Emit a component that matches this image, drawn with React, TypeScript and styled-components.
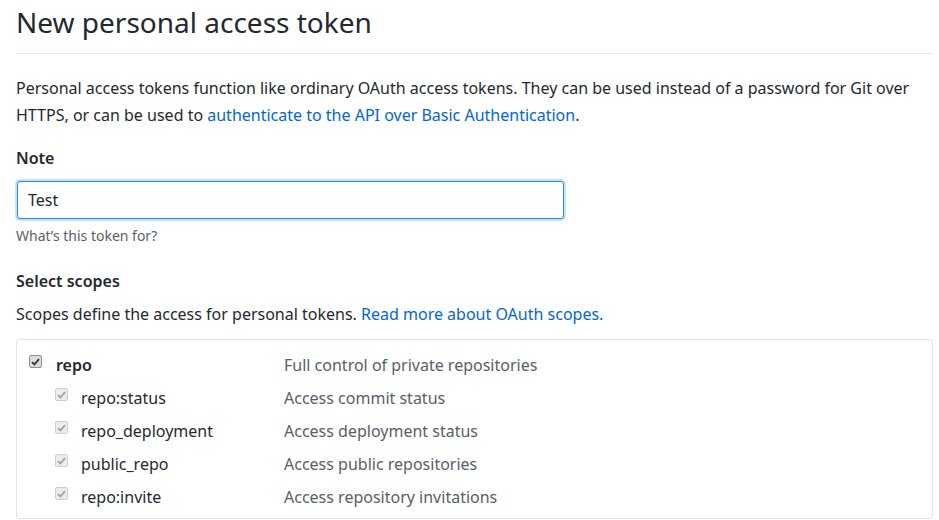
import styled, { createGlobalStyle } from "styled-components";

const GlobalStyle = createGlobalStyle`
  body {
    margin: 0;
    background: #fff;
    font-family: "Noto Sans", "Open Sans", sans-serif;
    color: #24292e;
  }
`

type Scope = {
    name: string
    text: string
    child?: boolean
}

const scopes: Scope[] = [
    {name: "repo", text: "Full control of private repositories"},
    {name: "repo:status", text: "Access commit status", child: true},
    {name: "repo_deployment", text: "Access deployment status", child: true},
    {name: "public_repo", text: "Access public repositories", child: true},
    {name: "repo:invite", text: "Access repository invitations", child: true},
]

const Check = ({muted}: { muted?: boolean }) => (
    <Box $muted={muted}>
        <svg width="9" height="8" viewBox="0 0 9 8">
            <path d="M1 4.2 L3.4 6.5 L8 1.2" fill="none" stroke={muted ? "#a0a0a0" : "#333"} strokeWidth="1.8"/>
        </svg>
    </Box>
)

export default function App() {
    return (
        <Page>
            <GlobalStyle/>
            <Header>
                <Title>New personal access token</Title>
            </Header>
            <Intro>
                Personal access tokens function like ordinary OAuth access tokens. They can be used instead of a
                password for Git over HTTPS, or can be used to <Link href="#">authenticate to the API over Basic
                Authentication</Link>.
            </Intro>
            <Label>Note</Label>
            <Input defaultValue="Test"/>
            <Hint>What’s this token for?</Hint>
            <Label $spaced>Select scopes</Label>
            <Desc>Scopes define the access for personal tokens. <Link href="#">Read more about OAuth scopes.</Link></Desc>
            <ScopeBox>
                {scopes.map(s => (
                    <Row key={s.name}>
                        <NameCell $child={s.child}>
                            <Check muted={s.child}/>
                            <Name $bold={!s.child}>{s.name}</Name>
                        </NameCell>
                        <ScopeText>{s.text}</ScopeText>
                    </Row>
                ))}
            </ScopeBox>
        </Page>
    );
}

const Page = styled.div`
  width: 917px;
  padding-left: 16px;
`

const Header = styled.div`
  border-bottom: 1px solid #e1e4e8;
  padding: 2px 0 11px;
`

const Title = styled.h1`
  margin: 0;
  font-size: 28px;
  font-weight: 400;
  line-height: 40px;
  color: #24292e;
`

const Intro = styled.p`
  margin: 21px 0 0;
  font-size: 16px;
  line-height: 27px;
`

const Link = styled.a`
  color: #0366d6;
  text-decoration: none;
`

const Label = styled.div<{ $spaced?: boolean }>`
  margin-top: ${p => p.$spaced ? "24px" : "17px"};
  font-size: 16px;
  font-weight: 600;
  line-height: 24px;
`

const Input = styled.input`
  display: block;
  box-sizing: border-box;
  width: 547px;
  height: 38px;
  margin: 11px 0 0 1px;
  padding: 0 10px;
  font-family: inherit;
  font-size: 16px;
  color: #24292e;
  border: 1px solid #2188ff;
  border-radius: 3px;
  box-shadow: 0 0 0 2px #c8e1ff;
  outline: none;
`

const Hint = styled.div`
  margin-top: 8px;
  font-size: 14px;
  line-height: 18px;
  color: #586069;
`

const Desc = styled.p`
  margin: 9px 0 0;
  font-size: 16px;
  line-height: 24px;
`

const ScopeBox = styled.div`
  margin-top: 13px;
  border: 1px solid #e1e4e8;
  border-radius: 3px;
  padding: 8px 0 5px;
`

const Row = styled.div`
  display: grid;
  grid-template-columns: 267px 1fr;
  align-items: center;
  height: 33px;
`

const NameCell = styled.div<{ $child?: boolean }>`
  display: flex;
  align-items: center;
  padding-left: ${p => p.$child ? "38px" : "12px"};
`

const Box = styled.span<{ $muted?: boolean }>`
  display: inline-flex;
  align-items: center;
  justify-content: center;
  box-sizing: border-box;
  width: 13px;
  height: 13px;
  margin-top: -6px;
  border: 1px solid ${p => p.$muted ? "#cfcfcf" : "#8f8f8f"};
  border-radius: 2px;
  background: ${p => p.$muted ? "#ececec" : "#dcdcdc"};
`

const Name = styled.span<{ $bold?: boolean }>`
  margin-left: ${p => p.$bold ? "14px" : "13px"};
  font-size: 16px;
  font-weight: ${p => p.$bold ? 600 : 400};
`

const ScopeText = styled.span`
  font-size: 16px;
  color: #586069;
`
